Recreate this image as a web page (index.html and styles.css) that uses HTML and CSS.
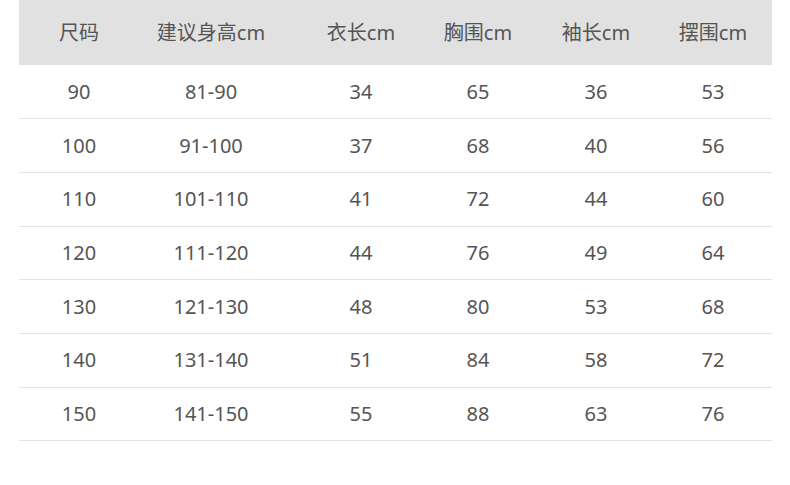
FILE: index.html
```html
<!DOCTYPE html>
<html lang="zh">
<head>
<meta charset="utf-8">
<link rel="stylesheet" href="styles.css">
</head>
<body>
<table class="size-table">
  <colgroup>
    <col class="c1"><col class="c2"><col class="c3"><col class="c4"><col class="c5"><col class="c6">
  </colgroup>
  <thead>
    <tr><th>尺码</th><th>建议身高cm</th><th>衣长cm</th><th>胸围cm</th><th>袖长cm</th><th class="last">摆围cm</th></tr>
  </thead>
  <tbody>
    <tr><td>90</td><td>81-90</td><td>34</td><td>65</td><td>36</td><td class="last">53</td></tr>
    <tr><td>100</td><td>91-100</td><td>37</td><td>68</td><td>40</td><td class="last">56</td></tr>
    <tr><td>110</td><td>101-110</td><td>41</td><td>72</td><td>44</td><td class="last">60</td></tr>
    <tr><td>120</td><td>111-120</td><td>44</td><td>76</td><td>49</td><td class="last">64</td></tr>
    <tr><td>130</td><td>121-130</td><td>48</td><td>80</td><td>53</td><td class="last">68</td></tr>
    <tr><td>140</td><td>131-140</td><td>51</td><td>84</td><td>58</td><td class="last">72</td></tr>
    <tr><td>150</td><td>141-150</td><td>55</td><td>88</td><td>63</td><td class="last">76</td></tr>
  </tbody>
</table>
</body>
</html>
```
FILE: styles.css
```css
html, body {
  margin: 0;
  padding: 0;
  background: #ffffff;
}
body {
  padding-left: 19px;
  font-family: "Noto Sans", "Noto Sans CJK SC", sans-serif;
  color: #555555;
}
.size-table {
  width: 753px;
  border-collapse: collapse;
  table-layout: fixed;
}
.c1 { width: 120px; }
.c2 { width: 144px; }
.c3 { width: 156px; }
.c4 { width: 78px; }
.c5 { width: 158px; }
.c6 { width: 97px; }
.size-table th,
.size-table td {
  padding: 0;
  text-align: center;
  font-size: 20px;
  font-weight: normal;
  line-height: 24px;
}
.size-table th.last,
.size-table td.last {
  padding-right: 21px;
}
.size-table thead tr {
  background: #e1e1e1;
  height: 65px;
}
.size-table th {
  color: #555555;
}
.size-table tbody tr {
  height: 53.7px;
  border-bottom: 1px solid #e4e4e4;
}
```
